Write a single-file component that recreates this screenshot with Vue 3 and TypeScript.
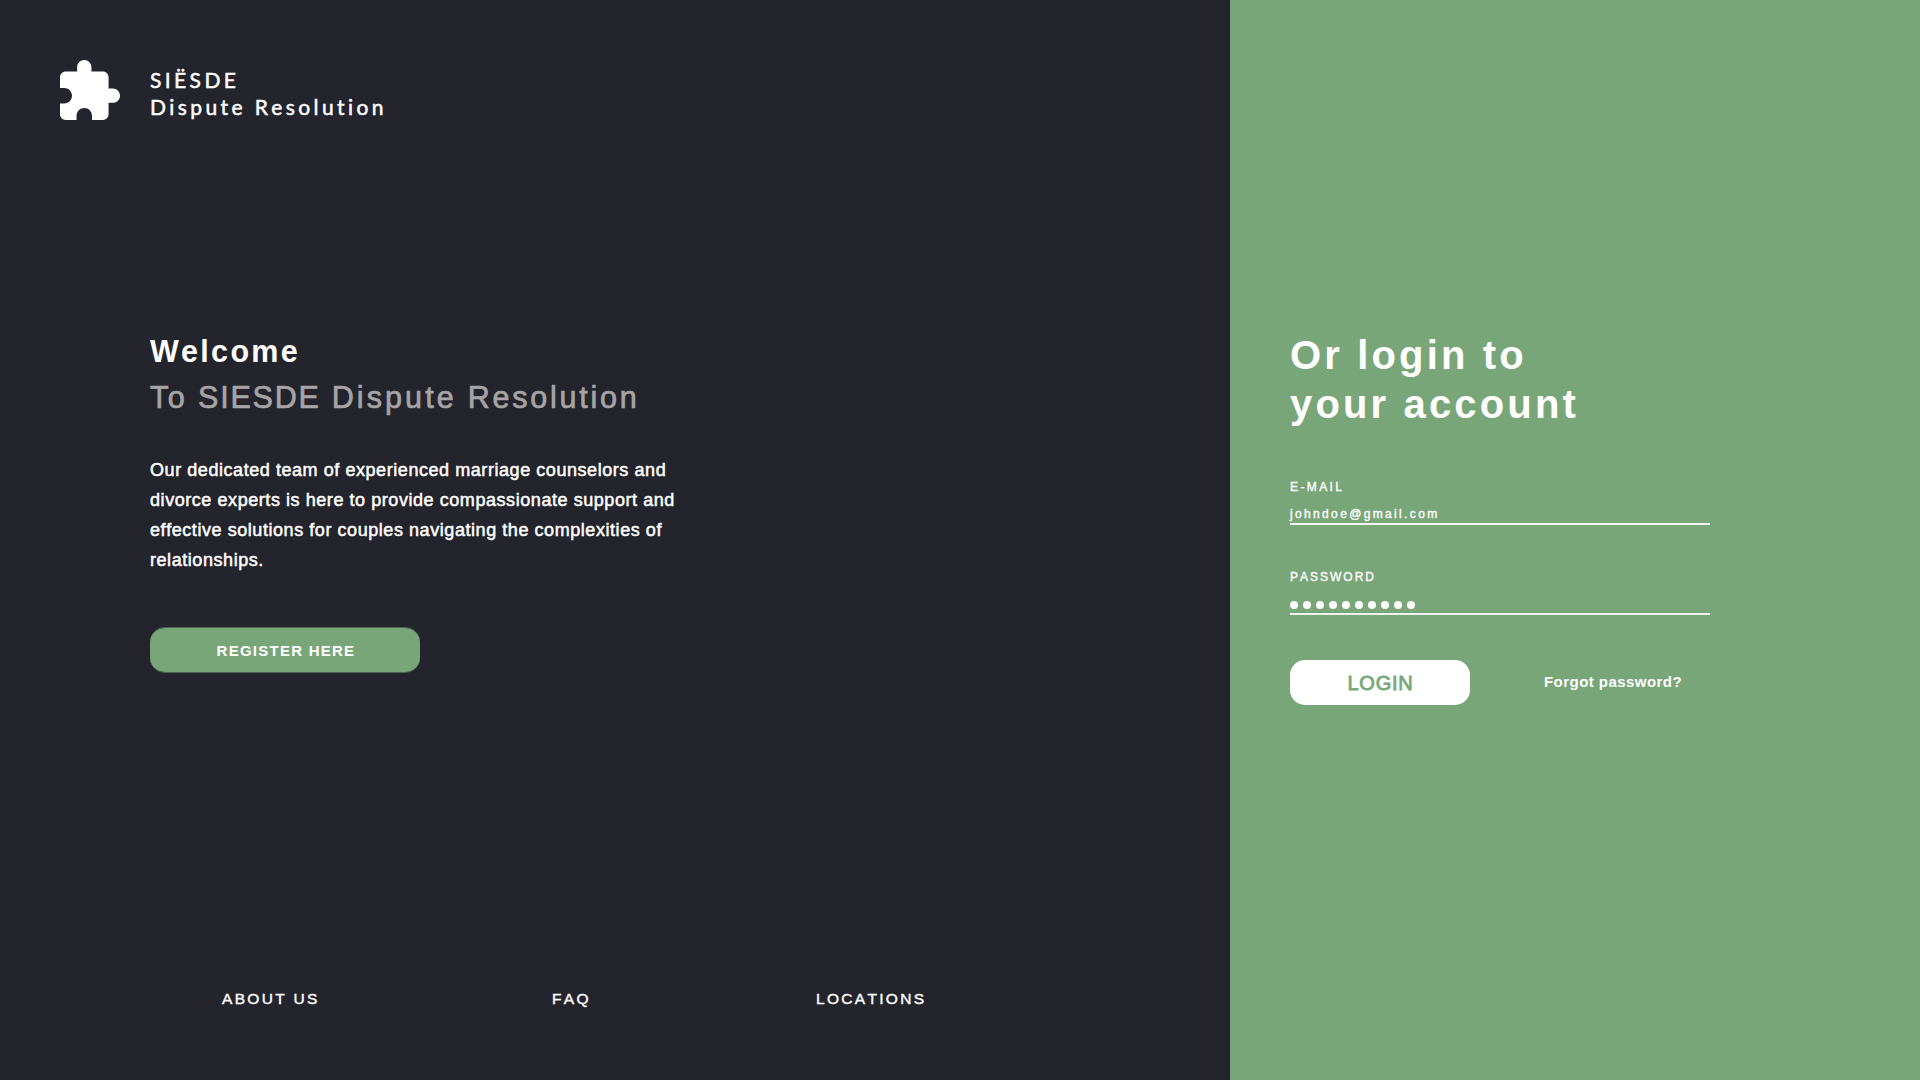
<script setup lang="ts">
import { ref } from 'vue'

const email = ref<string>('johndoe@gmail.com')
const passwordLength = 10

const intro: string[] = [
  'Our dedicated team of experienced marriage counselors and',
  'divorce experts is here to provide compassionate support and',
  'effective solutions for couples navigating the complexities of',
  'relationships.',
]
</script>

<template>
  <main class="page">
    <section class="info">
      <header class="brand">
        <svg class="brand-icon" viewBox="2 1 21 21" aria-hidden="true">
          <path
            d="M20.5 11H19V7c0-1.1-.9-2-2-2h-4V3.5C13 2.12 11.88 1 10.5 1S8 2.12 8 3.5V5H4c-1.1 0-2 .9-2 2v3.8h1.5c1.49 0 2.7 1.21 2.7 2.7s-1.21 2.7-2.7 2.7H2V20c0 1.1.9 2 2 2h3.8v-1.5c0-1.49 1.21-2.7 2.7-2.7s2.7 1.21 2.7 2.7V22H17c1.1 0 2-.9 2-2v-4h1.5c1.38 0 2.5-1.12 2.5-2.5S21.88 11 20.5 11z"
            fill="#fff"
          />
        </svg>
        <div class="brand-name">
          <div class="brand-top">SIËSDE</div>
          <div class="brand-bottom">Dispute Resolution</div>
        </div>
      </header>

      <div class="welcome">
        <h1>Welcome</h1>
        <h2>To <span class="acronym">SIESDE</span> <span class="dispute">Dispute</span> <span class="resolution">Resolution</span></h2>
        <p>
          <span v-for="line in intro" :key="line" class="line">{{ line }}</span>
        </p>
        <a class="register">REGISTER HERE</a>
      </div>

      <footer class="links">
        <a class="about">ABOUT US</a>
        <a class="faq">FAQ</a>
        <a class="locations">LOCATIONS</a>
      </footer>
    </section>

    <section class="login">
      <h2 class="login-title">Or login to<br />your account</h2>
      <div class="field">
        <span class="label label-email">E-MAIL</span>
        <div class="value">{{ email }}</div>
      </div>
      <div class="field">
        <span class="label">PASSWORD</span>
        <div class="value dots">
          <i v-for="n in passwordLength" :key="n"></i>
        </div>
      </div>
      <div class="actions">
        <a class="submit">LOGIN</a>
        <a class="forgot">Forgot password?</a>
      </div>
    </section>
  </main>
</template>

<style>
body {
  margin: 0;
}
</style>

<style scoped>
.page {
  display: flex;
  width: 1920px;
  height: 1080px;
  overflow: hidden;
  font-family: 'Liberation Sans', Arial, sans-serif;
  font-kerning: none;
  color: #fff;
  white-space: nowrap;
}

h1,
h2,
p {
  margin: 0;
}

.info {
  display: flex;
  flex-direction: column;
  box-sizing: border-box;
  width: 1230px;
  padding-top: 60px;
  background: #24242d;
}

.brand {
  display: flex;
  gap: 30px;
  height: 60px;
  padding-left: 60px;
}

.brand-icon {
  width: 60px;
  height: 60px;
}

.brand-name {
  padding-top: 6px;
  font-family: Lato, sans-serif;
  font-size: 21px;
  line-height: 27px;
  letter-spacing: 3.4px;
  -webkit-text-stroke: 0.5px #fff;
}

.welcome {
  display: flex;
  flex-direction: column;
  align-items: flex-start;
  height: 661px;
  padding: 208px 0 0 150px;
}

.welcome h1,
.welcome h2 {
  font-size: 30.5px;
  line-height: 46px;
}

.welcome h1 {
  font-weight: 700;
  letter-spacing: 2.3px;
}

.welcome h2 {
  font-weight: 400;
  font-kerning: normal;
  letter-spacing: 2.45px;
  color: #a6a4a5;
  -webkit-text-stroke: 0.7px #a6a4a5;
}

.acronym {
  letter-spacing: 1.8px;
}

.dispute {
  letter-spacing: 3.1px;
}

.resolution {
  letter-spacing: 2.75px;
}

.welcome p {
  margin: 35px 0 52px;
  font-size: 18px;
  line-height: 30px;
  letter-spacing: 0.56px;
  -webkit-text-stroke: 0.5px #fff;
}

.line {
  display: block;
}

.register {
  box-sizing: border-box;
  width: 270px;
  height: 46px;
  padding: 1px 0 0 2px;
  border: 0 solid #4f6554;
  border-width: 1px 0;
  border-radius: 15px;
  background: #79a679;
  background-clip: padding-box;
  text-align: center;
  font-size: 15px;
  font-weight: 700;
  line-height: 44px;
  letter-spacing: 1.25px;
}

.links {
  display: flex;
  padding-left: 222px;
  font-size: 15.5px;
  line-height: 20px;
  letter-spacing: 2.3px;
  -webkit-text-stroke: 0.4px #fff;
}

.about {
  width: 330px;
}

.faq {
  width: 264px;
}

.login {
  box-sizing: border-box;
  width: 690px;
  padding: 331px 0 0 60px;
  background: #79a679;
}

.login-title {
  margin-bottom: 50px;
  font-size: 40px;
  font-weight: 700;
  line-height: 49px;
  letter-spacing: 3.15px;
}

.field {
  width: 420px;
  height: 46px;
  margin-bottom: 44px;
  font-size: 12px;
  line-height: 16px;
  -webkit-text-stroke: 0.35px #fff;
}

.label {
  display: block;
  margin-bottom: 11px;
  letter-spacing: 2px;
}

.label-email {
  letter-spacing: 2.4px;
}

.value {
  height: 17px;
  border-bottom: 2px solid #f0f5f0;
  letter-spacing: 2.35px;
}

.dots {
  display: flex;
  align-items: flex-end;
  gap: 5px;
  box-sizing: border-box;
  height: 19px;
  padding-bottom: 4px;
}

.dots i {
  width: 8px;
  height: 8px;
  border-radius: 50%;
  background: #fff;
}

.actions {
  display: flex;
  padding-top: 1px;
}

.submit {
  box-sizing: border-box;
  width: 180px;
  height: 45px;
  padding: 2px 0 0 1px;
  border-radius: 15px;
  background: #fff;
  color: #79a679;
  text-align: center;
  font-size: 20px;
  line-height: 43px;
  letter-spacing: 0.8px;
  -webkit-text-stroke: 0.8px #79a679;
}

.forgot {
  margin-left: 74px;
  font-size: 15px;
  font-weight: 700;
  line-height: 44px;
  letter-spacing: 0.45px;
}
</style>
